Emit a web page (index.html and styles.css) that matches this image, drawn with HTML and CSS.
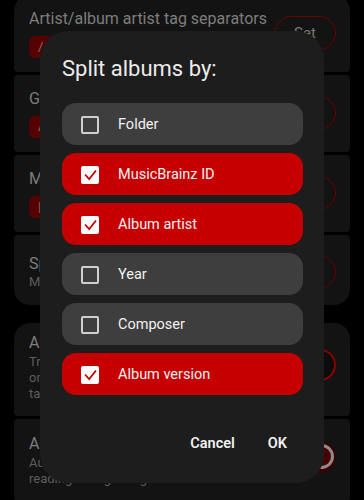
FILE: index.html
```html
<!DOCTYPE html>
<html lang="en">
<head>
    <meta charset="UTF-8">
    <meta name="viewport" content="width=device-width, initial-scale=1.0">
    <title>Library settings</title>
    <link rel="stylesheet" href="styles.css">
</head>
<body>
    <div class="settings">
        <div class="group">
            <div class="pref pref-first">
                <div class="pref-text">
                    <div class="pref-title">Artist/album artist tag separators</div>
                    <span class="chip">/ ; &amp;</span>
                </div>
                <button class="pref-btn">Set</button>
            </div>
            <div class="pref">
                <div class="pref-text">
                    <div class="pref-title">Genre tag separators</div>
                    <span class="chip">A</span>
                </div>
                <button class="pref-btn">Set</button>
            </div>
            <div class="pref">
                <div class="pref-text">
                    <div class="pref-title">Multi-value tag separators</div>
                    <span class="chip">|</span>
                </div>
                <button class="pref-btn">Set</button>
            </div>
            <div class="pref pref-last pref-split">
                <div class="pref-text">
                    <div class="pref-title">Split albums by</div>
                    <div class="pref-summary">MusicBrainz ID, Album artist</div>
                </div>
                <button class="pref-btn">Set</button>
            </div>
        </div>

        <div class="group">
            <div class="pref pref-first pref-long">
                <div class="pref-text">
                    <div class="pref-title">Auto album artist</div>
                    <div class="pref-summary">Try to guess the album artist when it is only in the artist tag, when reading tags</div>
                </div>
                <span class="switch"></span>
            </div>
            <div class="pref pref-long">
                <div class="pref-text">
                    <div class="pref-title">Auto rescan</div>
                    <div class="pref-summary">Automatically rescan the library when reading changed tags</div>
                </div>
                <span class="switch switch-on"><span class="thumb"></span></span>
            </div>
        </div>
    </div>

    <div class="dialog">
        <h2 class="dialog-title">Split albums by:</h2>
        <div class="options">
            <label class="option">
                <span class="box"></span>
                <span>Folder</span>
            </label>
            <label class="option checked">
                <span class="box"><svg viewBox="0 0 18 18"><path d="M4 8.5 L8.2 13 L15 4.5"/></svg></span>
                <span>MusicBrainz ID</span>
            </label>
            <label class="option checked">
                <span class="box"><svg viewBox="0 0 18 18"><path d="M4 8.5 L8.2 13 L15 4.5"/></svg></span>
                <span>Album artist</span>
            </label>
            <label class="option">
                <span class="box"></span>
                <span>Year</span>
            </label>
            <label class="option">
                <span class="box"></span>
                <span>Composer</span>
            </label>
            <label class="option checked">
                <span class="box"><svg viewBox="0 0 18 18"><path d="M4 8.5 L8.2 13 L15 4.5"/></svg></span>
                <span>Album version</span>
            </label>
        </div>
        <div class="dialog-actions">
            <button class="text-btn">Cancel</button>
            <button class="text-btn">OK</button>
        </div>
    </div>
</body>
</html>
```

FILE: styles.css
```css
* {
    margin: 0;
    padding: 0;
    box-sizing: border-box;
    font-family: Roboto, 'Noto Sans', sans-serif;
}

body {
    background: #000;
    width: 364px;
    height: 500px;
    overflow: hidden;
    position: relative;
}

/* settings list behind the dialog (already dimmed) */
.settings {
    padding: 0 14px;
    margin-top: -5px;
    display: flex;
    flex-direction: column;
    gap: 18px;
}

.group {
    display: flex;
    flex-direction: column;
    gap: 3px;
}

.pref {
    background: #131313;
    border-radius: 4px;
    padding: 13px 14px 14px 15px;
    display: flex;
    align-items: center;
    justify-content: space-between;
    min-height: 76px;
}

.pref-first {
    border-top-left-radius: 16px;
    border-top-right-radius: 16px;
}

.pref-last {
    border-bottom-left-radius: 16px;
    border-bottom-right-radius: 16px;
}

.pref-split {
    padding-top: 15px;
    padding-bottom: 12px;
    min-height: 70px;
}

.pref-long {
    padding-top: 9px;
    padding-bottom: 14px;
    min-height: 93px;
}

.pref-long + .pref-long {
    padding-top: 14px;
    min-height: 82px;
}

.pref-text {
    flex: 1;
    min-width: 0;
}

.pref-title {
    color: #7d7d7d;
    font-size: 16px;
    line-height: 22px;
    white-space: nowrap;
}

.pref-summary {
    color: #5d5d5d;
    font-size: 13px;
    line-height: 16px;
    padding-right: 30px;
}

.pref-split .pref-summary {
    margin-top: -1px;
}

.chip {
    display: inline-block;
    margin-top: 6px;
    background: #560000;
    color: #8a6a6a;
    border-radius: 6px;
    font-size: 13px;
    line-height: 22px;
    padding: 0 12px 0 9px;
    min-width: 60px;
}

.pref-btn {
    width: 62px;
    height: 34px;
    flex-shrink: 0;
    border: 1.5px solid #6a0000;
    border-radius: 17px;
    background: transparent;
    color: #777;
    font-size: 15px;
}

.switch {
    width: 52px;
    height: 32px;
    flex-shrink: 0;
    border: 2px solid #8a0000;
    border-radius: 16px;
    background: #0c0c0c;
    position: relative;
    margin-bottom: 4px;
}

.switch-on {
    border: none;
    background: #3a0000;
    margin-bottom: 6px;
}

.switch-on .thumb {
    position: absolute;
    right: 2px;
    top: 3px;
    width: 25px;
    height: 25px;
    border-radius: 50%;
    border: 3px solid #8c8c8c;
    background: #4a0000;
}

/* dialog */
.dialog {
    position: absolute;
    left: 40px;
    top: 31px;
    width: 284px;
    height: 452px;
    background: #1d1d1d;
    border-radius: 28px;
    padding: 24px 21px 0 22px;
}

.dialog-title {
    color: #ececec;
    font-size: 22px;
    font-weight: 400;
    line-height: 28px;
    margin-bottom: 20px;
}

.options {
    display: flex;
    flex-direction: column;
    gap: 8px;
}

.option {
    height: 42px;
    border-radius: 14px;
    background: #3e3e3e;
    display: flex;
    align-items: center;
    gap: 19px;
    padding-left: 19px;
    padding-top: 1px;
    color: #f2f2f2;
    font-size: 14.5px;
}

.option.checked {
    background: #c60000;
}

.box {
    width: 18px;
    height: 18px;
    border: 2px solid #cfcfcf;
    border-radius: 2px;
    display: flex;
}

.checked .box {
    background: #fff;
    border-color: #fff;
}

.box svg {
    width: 18px;
    height: 18px;
    margin: -2px;
    fill: none;
    stroke: #c60000;
    stroke-width: 1.8;
}

.dialog-actions {
    display: flex;
    justify-content: flex-end;
    gap: 33px;
    margin-top: 39px;
    padding-right: 16px;
}

.text-btn {
    background: none;
    border: none;
    color: #f0f0f0;
    font-size: 14.5px;
    font-weight: 600;
    line-height: 20px;
}
```
